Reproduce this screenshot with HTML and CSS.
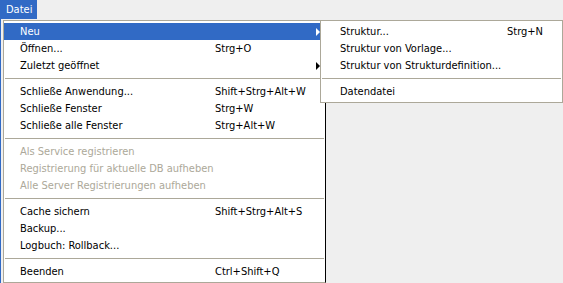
FILE: index.html
```html
<!DOCTYPE html>
<html lang="de">
<head>
    <meta charset="UTF-8">
    <title>Datei</title>
    <link rel="stylesheet" href="styles.css">
</head>
<body>

    <div class="menubar">
        <span class="menu-title">Datei</span>
    </div>

    <div class="menu main-menu">
        <div class="item active"><span class="label">Neu</span><span class="key"></span><span class="arrow"></span></div>
        <div class="item"><span class="label">Öffnen...</span><span class="key">Strg+O</span></div>
        <div class="item"><span class="label">Zuletzt geöffnet</span><span class="key"></span><span class="arrow"></span></div>
        <div class="sep"></div>
        <div class="item"><span class="label">Schließe Anwendung...</span><span class="key">Shift+Strg+Alt+W</span></div>
        <div class="item"><span class="label">Schließe Fenster</span><span class="key">Strg+W</span></div>
        <div class="item"><span class="label">Schließe alle Fenster</span><span class="key">Strg+Alt+W</span></div>
        <div class="sep"></div>
        <div class="item disabled"><span class="label">Als Service registrieren</span></div>
        <div class="item disabled"><span class="label">Registrierung für aktuelle DB aufheben</span></div>
        <div class="item disabled"><span class="label">Alle Server Registrierungen aufheben</span></div>
        <div class="sep"></div>
        <div class="item"><span class="label">Cache sichern</span><span class="key">Shift+Strg+Alt+S</span></div>
        <div class="item"><span class="label">Backup...</span></div>
        <div class="item"><span class="label">Logbuch: Rollback...</span></div>
        <div class="sep"></div>
        <div class="item"><span class="label">Beenden</span><span class="key">Ctrl+Shift+Q</span></div>
    </div>

    <div class="menu sub-menu">
        <div class="item"><span class="label">Struktur...</span><span class="key">Strg+N</span></div>
        <div class="item"><span class="label">Struktur von Vorlage...</span></div>
        <div class="item"><span class="label">Struktur von Strukturdefinition...</span></div>
        <div class="sep"></div>
        <div class="item"><span class="label">Datendatei</span></div>
    </div>

</body>
</html>
```

FILE: styles.css
```css
body {
    font-family: 'DejaVu Sans Condensed', 'DejaVu Sans', sans-serif;
    font-stretch: condensed;
    font-size: 11px;
    background-color: #efefef;
    margin: 0;
    padding: 0;
    height: 283px;
    border-left: 1px solid #316ac5;
    box-sizing: border-box;
    overflow: hidden;
}
.menubar {
    height: 20px;
    display: flex;
    margin-left: -1px;
}
.menu-title {
    background: #316ac5;
    color: white;
    width: 37px;
    height: 19px;
    line-height: 19px;
    padding-left: 6px;
    box-sizing: border-box;
}
.menu {
    position: absolute;
    background: white;
    border: 1px solid #aca899;
    padding: 2px 0;
    box-sizing: border-box;
}
.main-menu {
    left: 3px;
    top: 20px;
    width: 323px;
    border-right-color: #000;
}
.sub-menu {
    left: 320px;
    top: 20px;
    width: 243px;
}
.item {
    display: flex;
    height: 17px;
    line-height: 17px;
    padding-left: 16px;
    color: black;
    white-space: nowrap;
}
.main-menu .label {
    width: 195px;
}
.sub-menu .item {
    padding-left: 19px;
}
.sub-menu .label {
    width: 167px;
}
.item.active {
    background: #316ac5;
    color: white;
}
.item.disabled {
    color: #aca899;
}
.arrow {
    margin-left: auto;
    margin-right: 5px;
    margin-top: 5px;
    width: 0;
    height: 0;
    border-top: 4px solid transparent;
    border-bottom: 4px solid transparent;
    border-left: 4px solid black;
}
.active .arrow {
    border-left-color: white;
}
.sep {
    height: 9px;
    position: relative;
}
.sep::after {
    content: "";
    position: absolute;
    left: 1px;
    right: 1px;
    top: 4px;
    border-top: 1px solid #aca899;
}
```
